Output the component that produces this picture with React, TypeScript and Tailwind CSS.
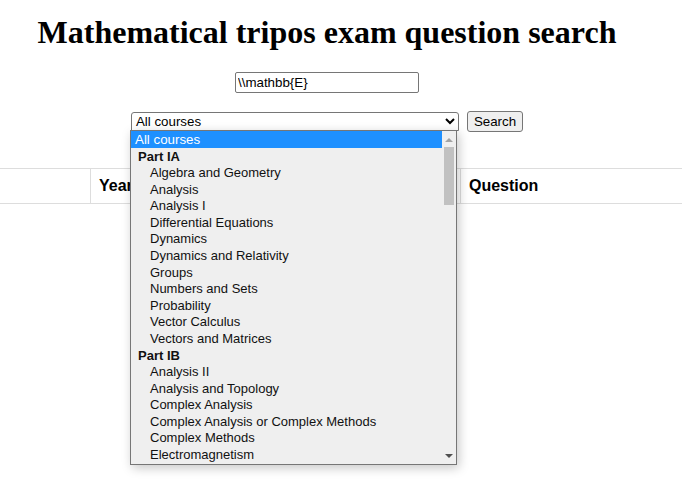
import React from "react"

const partIA = [
  "Algebra and Geometry",
  "Analysis",
  "Analysis I",
  "Differential Equations",
  "Dynamics",
  "Dynamics and Relativity",
  "Groups",
  "Numbers and Sets",
  "Probability",
  "Vector Calculus",
  "Vectors and Matrices",
]

const partIB = [
  "Analysis II",
  "Analysis and Topology",
  "Complex Analysis",
  "Complex Analysis or Complex Methods",
  "Complex Methods",
  "Electromagnetism",
]

function Option({ label, group }: { label: string; group?: boolean }) {
  return (
    <div
      className={
        group
          ? "h-[16.58px] pt-[1px] leading-[15.58px] pl-[7px] font-bold whitespace-nowrap"
          : "h-[16.58px] pt-[1px] leading-[15.58px] pl-[19px] whitespace-nowrap"
      }
    >
      {label}
    </div>
  )
}

function CourseDropdown() {
  return (
    <div className="absolute left-[130px] top-[130px] w-[327px] h-[335px] flex border border-[#767676] bg-[#efefef] text-[13px] text-[#111] shadow-[2px_3px_10px_rgba(0,0,0,0.22)]">
      <div className="flex-1 overflow-hidden">
        <div className="h-[16.58px] pt-[1px] leading-[15.58px] pl-[4px] bg-[#1e90ff] text-white text-[13.33px]">All courses</div>
        <Option label="Part IA" group />
        {partIA.map((c) => (
          <Option key={c} label={c} />
        ))}
        <Option label="Part IB" group />
        {partIB.map((c) => (
          <Option key={c} label={c} />
        ))}
      </div>
      <div className="w-[14px] flex flex-col">
        <div className="h-[16px] flex items-center justify-center">
          <svg width="8" height="5" viewBox="0 0 8 5">
            <path d="M0 5 L4 1 L8 5 Z" fill="#a3a3a3" />
          </svg>
        </div>
        <div className="h-[58px] mx-[2px] bg-[#c1c1c1]" />
        <div className="flex-1" />
        <div className="h-[16px] flex items-center justify-center">
          <svg width="8" height="5" viewBox="0 0 8 5">
            <path d="M0 0 L8 0 L4 4 Z" fill="#505050" />
          </svg>
        </div>
      </div>
    </div>
  )
}

export default function App() {
  return (
    <div className="relative w-[682px] h-[482px] overflow-hidden bg-white text-black font-['Liberation_Sans',Arial,sans-serif]">
      <div className="w-[654px] flex flex-col items-center">
        <h1 className="mt-[15px] font-['Liberation_Serif','Times_New_Roman',serif] text-[32px] leading-[35px] font-bold">
          Mathematical tripos exam question search
        </h1>
        <input
          readOnly
          value={"\\\\mathbb{E}"}
          className="mt-[22px] w-[184px] h-[21px] px-[2px] border border-[#767676] rounded-[2px] text-[13.33px] outline-none"
        />
        <div className="mt-[18px] flex items-center gap-[8px]">
          <div className="w-[328px] h-[19px] flex items-center justify-between pl-[4px] pr-[3px] border border-[#767676] rounded-t-[3px] text-[13.33px]">
            <span>All courses</span>
            <svg width="10" height="7" viewBox="0 0 10 7">
              <path d="M1 1 L5 5 L9 1" stroke="#000" strokeWidth="2" fill="none" />
            </svg>
          </div>
          <button className="h-[21px] px-[6px] bg-[#efefef] border border-[#767676] rounded-[3px] text-[13.33px]">
            Search
          </button>
        </div>
      </div>
      <div className="mt-[36px] w-[682px] h-[36px] flex border-y border-[#dddddd] text-[16px] font-bold">
        <div className="w-[90px] shrink-0" />
        <div className="w-[370px] shrink-0 flex items-center pl-[8px] border-l border-[#dddddd]">Year</div>
        <div className="flex-1 flex items-center pl-[8px] border-l border-[#dddddd]">Question</div>
      </div>
      <CourseDropdown />
    </div>
  )
}
